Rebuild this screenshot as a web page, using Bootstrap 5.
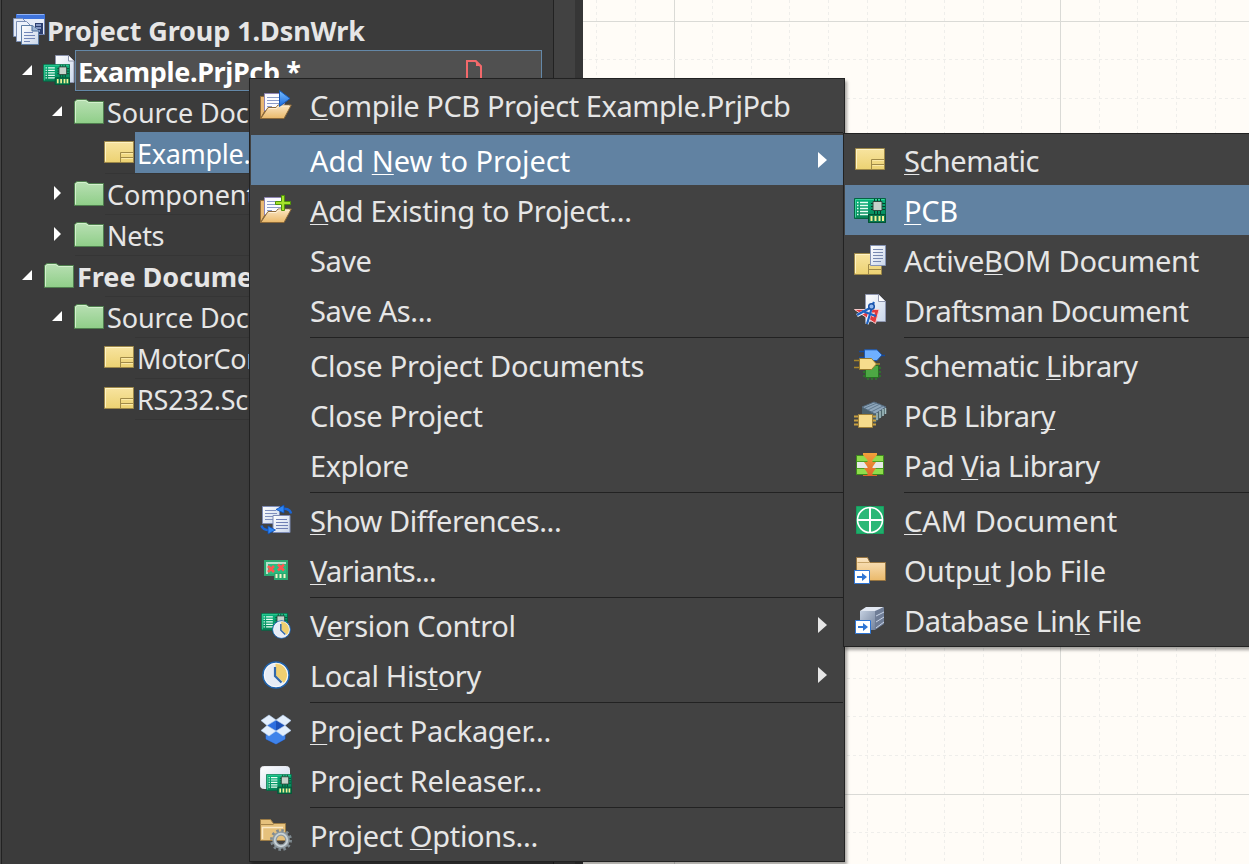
<!DOCTYPE html>
<html lang="en">
<head>
<meta charset="utf-8">
<meta name="viewport" content="width=device-width, initial-scale=1">
<title>Project Group 1.DsnWrk</title>
<link href="https://cdn.jsdelivr.net/npm/bootstrap@5.3.0/dist/css/bootstrap.min.css" rel="stylesheet">
<script src="https://cdn.jsdelivr.net/npm/bootstrap@5.3.0/dist/js/bootstrap.bundle.min.js"></script>
<style>
body{width:1249px;height:864px;overflow:hidden;background:#3b3b3b;color:#e6e6e6;font-family:"Noto Sans","Open Sans",sans-serif}
svg{display:block;flex:none;overflow:visible}
.projects{width:583px;background:#3b3b3b;border-left:1px solid #454545}
.tree{width:553px;padding-top:9px;border-left:1px solid #222;border-right:1px solid #222;font-size:27px;line-height:41px}
.strip{width:21px;background:#424242}
.gutter{width:8px;background:#363636}
.node{height:41px;white-space:nowrap;padding-left:calc(var(--lv)*30px + 10px);background:linear-gradient(#353535,#353535) no-repeat var(--line,600px) 0/100% 1px}
.caret{width:32px;height:41px}
.node .label{padding-left:3px;height:41px}
.node.fw-bold .label{padding-left:2px}
.node .label span{display:inline-block;position:relative;top:1px}
.editing{width:467px;border:1px solid #6488a8;background:#505050;color:#fff;line-height:39px}
.node .label.picked{background:#5f82a3;color:#fff;flex:1;padding-left:2px;margin-left:1px}
.menu-pop{position:absolute;background:#424242;border:1px solid #222;padding:1px;box-shadow:2px 3px 3px rgba(0,0,0,.35);font-size:29px;white-space:nowrap}
#project-menu{left:249px;top:78px;width:596px;height:784px}
#new-menu{left:843px;top:133px;width:430px;height:514px}
.entry{height:50px;line-height:50px;padding-left:9px}
.entry .icon{width:32px;height:32px;margin-right:18px;flex:none}
.entry span{padding-top:2px}
.entry.on{background:#6182a2;color:#fff}
.entry u{text-decoration-thickness:1px;text-underline-offset:2px;text-decoration-skip-ink:none}
.rule{height:5px;padding:2px 0;margin-left:59px}
.rule::before{content:"";display:block;height:1px;background:#222}
.go{margin-left:auto;margin-right:15px}
.tk-1{letter-spacing:-.1px}.tk-2{letter-spacing:-.24px}.tk-3{letter-spacing:-.3px}.tk-35{letter-spacing:-.36px}
.tk-4{letter-spacing:-.42px}.tk-5{letter-spacing:-.49px}.tk-6{letter-spacing:-.56px}.tk-8{letter-spacing:-.77px}
</style>
</head>
<body>
<svg width="0" height="0" class="position-absolute">
<defs>
<linearGradient id="gGreen" x2="0" y2="1"><stop stop-color="#b9e0b4"/><stop offset="1" stop-color="#8fce88"/></linearGradient>
<linearGradient id="gYellow" x2="0" y2="1"><stop stop-color="#f8e4a0"/><stop offset="1" stop-color="#ecd272"/></linearGradient>
<linearGradient id="gTan" x2="0" y2="1"><stop stop-color="#fbe6c4"/><stop offset="1" stop-color="#eab96a"/></linearGradient>
<linearGradient id="gPaper" x2="1" y2="1"><stop stop-color="#fff"/><stop offset="1" stop-color="#c9d6ea"/></linearGradient>
<linearGradient id="gBlue" x2="0" y2="1"><stop stop-color="#7cc0ff"/><stop offset="1" stop-color="#1668e0"/></linearGradient>
<linearGradient id="gBoard" x2="0" y2="1"><stop stop-color="#08b47c"/><stop offset="1" stop-color="#077a50"/></linearGradient>
<linearGradient id="gServer" x2="1" y2="1"><stop stop-color="#c3cfe0"/><stop offset="1" stop-color="#74839c"/></linearGradient>
<linearGradient id="gVia" x2="0" y2="1"><stop stop-color="#f2a23a"/><stop offset="1" stop-color="#e0642a"/></linearGradient>
<symbol id="folder" viewBox="0 0 30 41"><path d="M.5 32.500V10.500L3 8.500h9l3 2h14.500v22z" fill="url(#gGreen)" stroke="#4f7f4e"/><path d="M1.500 31.500V11L3.500 9.500h8l3 2h14.500" fill="none" stroke="#d3f0cd"/></symbol>
<symbol id="sheet" viewBox="0 0 30 22"><path d="M.5.5h29v21H.5z" fill="url(#gYellow)" stroke="#9c8748"/><path d="M1.500 20.500v-19h27" fill="none" stroke="#fff3c4"/><path d="M16.500 21v-9.500H29M17 16.500h12" fill="none" stroke="#a08a48"/><path d="M17.500 12.500H29M17.500 17.500H29" stroke="#fbe9a8"/></symbol>
<symbol id="board" viewBox="0 0 32 25"><path d="M.5.5h31v24h-17v-4H.5z" fill="url(#gBoard)" stroke="#056443"/><path d="M1.500 19.500v-18h29" fill="none" stroke="#39d39c"/><path d="M3 4.500h1.500M3 7.500h1.500M3 10.500h1.500M3 13.500h1.500M3 16.500h1.500M6 4.500h8M6 7.500h8M6 10.500h8M6 13.500h8M6 16.500h8" stroke="#eafff5" stroke-width="1.500"/><path d="M20.500 1v15M23.500 1v15M26.500 1v15M17 5.500h14M17 8.500h14M17 11.500h14" stroke="#03402c"/><path d="M19 3.500h9v9h-9z" fill="#c5d2cb" stroke="#2e4a3e"/><path d="M14.500 16.500h17v8h-17z" fill="#087a4f" stroke="#045234"/><path d="M17.500 18v5M21.500 18v5M25.500 18v5M29 18v5" stroke="#f4f294" stroke-width="2"/></symbol>
<symbol id="openfolder" viewBox="0 0 32 32"><path d="M.5 29.500v-22h3.500v-1h4v10z" fill="#e9b873" stroke="#8e6a38"/><path d="M4.500 22V4.500h16L24.500 8v10z" fill="#fbfbff" stroke="#8f86b5"/><path d="M7 8.500h12M7 11.500h14M7 14.500h14M7 17.500h5" stroke="#8c9cc8"/><path d="M.8 29.500 8 18.500h8l2-2.500h13.300L24 29.500z" fill="url(#gTan)" stroke="#8d6a3a"/><path d="M9 19.500h7.500l2-2.500H29" fill="none" stroke="#fff0d6"/></symbol>
<symbol id="clock" viewBox="0 0 28 28"><circle cx="14" cy="14" r="13" fill="#e6ecf6" stroke="#1f64b0" stroke-width="1.500"/><path d="M13.500 14V2a12 12 0 0 1 8.500 20z" fill="#f0cf70"/><circle cx="14" cy="14" r="11.700" fill="none" stroke="#fff" stroke-width="1" opacity=".7"/><path d="M13 6v9l6.500 6.500" fill="none" stroke="#3269ab" stroke-width="2.200"/></symbol>
<symbol id="jump" viewBox="0 0 16 14"><path d="M.5.5h15v13H.5z" fill="#fff" stroke="#2e75d4"/><path d="M3 7h7" stroke="#2e75d4" stroke-width="2"/><path d="m8 3 5 4-5 4z" fill="#2e75d4"/></symbol>
<symbol id="open" viewBox="0 0 32 41"><path d="M20 15v10H10z" fill="#fff"/></symbol>
<symbol id="shut" viewBox="0 0 32 41"><path d="M12 13v14l7-7z" fill="#fff"/></symbol>
</defs>
</svg>

<main class="position-relative d-flex w-100 h-100 overflow-hidden">
  <aside class="projects d-flex flex-shrink-0">
    <div class="tree">
      <div class="node d-flex fw-bold" style="--lv:0">
        <svg width="33" height="41"><path d="M4.500 5.500h28v20h-28z" fill="#e6ecf8" stroke="#6d7fae"/><path d="M4 5h29v5H4z" fill="#3f74dc"/><path d="M5 5.500h27" stroke="#8fb2f4"/><path d="M23 14h8v11h-8z" fill="#2c3f70"/><path d="M24 16h5M24 19h5M24 22h4" stroke="#9fb2dd" stroke-width="1.500"/><path d="M1.500 9.500h9l4 4v14h-13z" fill="#e3e9f5" stroke="#7b8fb5"/><path d="M4.500 12.500h10l4 4v16h-14z" fill="#edf2fb" stroke="#7b8fb5"/><path d="M9.500 16.500h11l6 5v14h-17z" fill="url(#gPaper)" stroke="#5d7da5"/><path d="M20 16.500v5.500h6" fill="#9eb6d6" stroke="#486a98"/><path d="M12 23.500h9M12 26.500h11M12 29.500h11M12 32.500h6" stroke="#7286b8"/></svg>
        <div class="label tk-1"><span>Project Group 1.DsnWrk</span></div>
      </div>
      <div class="node d-flex fw-bold" style="--lv:0"><svg class="caret"><use href="#open"/></svg>
        <svg width="31" height="41"><path d="M11.500 32.500v-27h13l5.500 5.500v21.500z" fill="url(#gPaper)" stroke="#8b93ad"/><path d="M24.500 5.500V11H30" fill="#fff" stroke="#8b93ad"/><use href="#board" x="-1" y="14" width="27" height="21"/></svg>
        <div class="label editing d-flex tk-35"><span>Example.PrjPcb *</span><svg class="ms-auto" width="16" height="24" style="margin:9px 59px 0 0"><path d="M1 22V1h8.500L15 6.500V22z" fill="none" stroke="#f2696b" stroke-width="2"/><path d="M10 0v6h6z" fill="#f2696b"/></svg></div>
      </div>
      <div class="node d-flex" style="--lv:1;--line:73px"><svg class="caret"><use href="#open"/></svg><svg width="30" height="41"><use href="#folder"/></svg><div class="label tk-1"><span>Source Documents</span></div></div>
      <div class="node d-flex" style="--lv:2"><span class="caret"></span><svg width="30" height="41"><use href="#sheet" y="9" width="30" height="22"/></svg><div class="label picked tk-3"><span>Example.SchDoc</span></div></div>
      <div class="node d-flex" style="--lv:1;--line:103px"><svg class="caret"><use href="#shut"/></svg><svg width="30" height="41"><use href="#folder"/></svg><div class="label tk-1"><span>Components</span></div></div>
      <div class="node d-flex" style="--lv:1;--line:103px"><svg class="caret"><use href="#shut"/></svg><svg width="30" height="41"><use href="#folder"/></svg><div class="label tk-3"><span>Nets</span></div></div>
      <div class="node d-flex fw-bold" style="--lv:0;--line:73px"><svg class="caret"><use href="#open"/></svg><svg width="31" height="41"><use href="#folder" width="30"/></svg><div class="label"><span>Free Documents</span></div></div>
      <div class="node d-flex" style="--lv:1;--line:103px"><svg class="caret"><use href="#open"/></svg><svg width="30" height="41"><use href="#folder"/></svg><div class="label tk-1"><span>Source Documents</span></div></div>
      <div class="node d-flex" style="--lv:2;--line:133px"><span class="caret"></span><svg width="30" height="41"><use href="#sheet" y="9" width="30" height="22"/></svg><div class="label tk-3"><span>MotorControl.SchDoc</span></div></div>
      <div class="node d-flex" style="--lv:2;--line:133px"><span class="caret"></span><svg width="30" height="41"><use href="#sheet" y="9" width="30" height="22"/></svg><div class="label tk-2"><span>RS232.SchDoc</span></div></div>
      <div class="node" style="--lv:2;--line:133px"></div>
    </div>
    <div class="strip"></div><div class="gutter"></div>
  </aside>

  <section class="flex-fill">
    <svg width="666" height="864" id="sheet-grid"><rect width="666" height="864" fill="#fffcf7"/></svg>
  </section>

  <div class="menu-pop" id="project-menu">
    <div class="entry d-flex align-items-center"><svg class="icon"><use href="#openfolder"/><path d="M19.500 1.500v16L30 9.500z" fill="url(#gBlue)" stroke="#1559b8"/></svg><span class="tk-4"><u>C</u>ompile PCB Project Example.PrjPcb</span></div>
    <div class="rule"></div>
    <div class="entry on d-flex align-items-center"><i class="icon"></i><span>Add <u>N</u>ew to Project</span><svg class="go" width="10" height="16"><path d="M0 0v16l9-8z" fill="#fff"/></svg></div>
    <div class="entry d-flex align-items-center"><svg class="icon"><use href="#openfolder" y="-1"/><path d="M21.500 1.500h3v6h6v3h-6v6h-3v-6h-6v-3h6z" fill="#a5e22c" stroke="#4f9408"/></svg><span class="tk-3"><u>A</u>dd Existing to Project...</span></div>
    <div class="entry d-flex align-items-center"><i class="icon"></i><span class="tk-5">Save</span></div>
    <div class="entry d-flex align-items-center"><i class="icon"></i><span class="tk-4">Save As...</span></div>
    <div class="rule"></div>
    <div class="entry d-flex align-items-center"><i class="icon"></i><span class="tk-2">Close Project Documents</span></div>
    <div class="entry d-flex align-items-center"><i class="icon"></i><span class="tk-2">Close Project</span></div>
    <div class="entry d-flex align-items-center"><i class="icon"></i><span class="tk-5">Explore</span></div>
    <div class="rule"></div>
    <div class="entry d-flex align-items-center"><svg class="icon"><path d="M2.500 2.500h17v17h-17z" fill="url(#gPaper)" stroke="#7d8bb5"/><path d="M5 6.500h11M5 9.500h12M5 12.500h12M5 15.500h8" stroke="#7f8fbe"/><path d="M13 11.500h17v17H13z" fill="url(#gPaper)" stroke="#7d8bb5"/><path d="M16 15.500h11M16 18.500h12M16 21.500h12M16 24.500h12" stroke="#6f80b5"/><path d="M31 9.500C30 5.500 26 4.500 22 5" fill="none" stroke="#1a66d8" stroke-width="2.500"/><path d="M16 5.500 24 1v8z" fill="#2e86f4" stroke="#0d4fb8" stroke-width=".8"/><path d="M1.500 21.500c1 4 4 4.700 8 4.700" fill="none" stroke="#1a66d8" stroke-width="2.500"/><path d="m15.500 26-7.500-4v8z" fill="#2e86f4" stroke="#0d4fb8" stroke-width=".8"/></svg><span class="tk-4"><u>S</u>how Differences...</span></div>
    <div class="entry d-flex align-items-center"><svg class="icon"><path d="M4 6h24v20H14v-4H4z" fill="#2aa871"/><path d="M6 8h20v11H14v1H6z" fill="#27bd80"/><path d="M7 20V9h19" fill="none" stroke="#b4e0ca" stroke-width="2"/><path d="M16.500 20v4M20.500 20v4M24.500 20v4" stroke="#f6f4c8" stroke-width="2"/><path d="m8 12 6 6m0-6-6 6M18 10.500l6 6m0-6-6 6" stroke="#ff5550" stroke-width="2.600"/></svg><span class="tk-8"><u>V</u>ariants...</span></div>
    <div class="rule"></div>
    <div class="entry d-flex align-items-center"><svg class="icon"><use href="#board" x="1" y="4" width="27" height="21"/><use href="#clock" x="12" y="11" width="19" height="19"/></svg><span class="tk-3">V<u>e</u>rsion Control</span><svg class="go" width="10" height="16"><path d="M0 0v16l9-8z" fill="#e6e6e6"/></svg></div>
    <div class="entry d-flex align-items-center"><svg class="icon"><use href="#clock" x="2" y="2" width="28" height="28"/></svg><span class="tk-35">Local His<u>t</u>ory</span><svg class="go" width="10" height="16"><path d="M0 0v16l9-8z" fill="#e6e6e6"/></svg></div>
    <div class="rule"></div>
    <div class="entry d-flex align-items-center"><svg class="icon"><path d="M6 19v6l10 5 9-5v-6l-9-4z" fill="#4a90f0" stroke="#2458b8"/><path d="m16 18-10 4v3l10 5 9-5v-3z" fill="#3f83ea"/><path d="m16 6 9.500 5L16 17 6 11z" fill="#2e6fe0"/><path d="M16 6v11l9.500-6z" fill="#1c50b8"/><path d="m9 1 7 5-9 5.500L1 6.500zM23 1l-7 5 9 5.500 6-5zM7 11.500l9 5.500-7 5-8-5.500zM25 11.500 16 17l7 5 8-5.500z" fill="#e2eefc" stroke="#b4cef0" stroke-width=".6"/></svg><span class="tk-3"><u>P</u>roject Packager...</span></div>
    <div class="entry d-flex align-items-center"><svg class="icon"><rect x=".5" y="2.500" width="29" height="22" rx="3" fill="url(#gPaper)" stroke="#e8eaf0"/><use href="#board" x="6" y="10" width="26" height="20"/></svg><span class="tk-3">Project Releaser...</span></div>
    <div class="rule"></div>
    <div class="entry d-flex align-items-center"><svg class="icon"><path d="M.5 21.500V.5h10l3 4h12v17z" fill="#e6c17c" stroke="#9c7c46"/><path d="M2.500 20V8.500H23" fill="none" stroke="#fbe9c6" stroke-width="1.500"/><path d="M.5 5.500h13" stroke="#a8864c"/><circle cx="21" cy="21" r="9.500" fill="none" stroke="#7f8a90" stroke-width="3" stroke-dasharray="2.500 2.475"/><circle cx="21" cy="21" r="6.500" fill="none" stroke="#8e999f" stroke-width="4.500"/><circle cx="21" cy="21" r="6.300" fill="none" stroke="#c8d2d6" stroke-width="1.800"/></svg><span class="tk-3">Project <u>O</u>ptions...</span></div>
  </div>

  <div class="menu-pop" id="new-menu">
    <div class="entry d-flex align-items-center"><svg class="icon"><use href="#sheet" x="1" y="4" width="30" height="22"/></svg><span class="tk-5"><u>S</u>chematic</span></div>
    <div class="entry on d-flex align-items-center"><svg class="icon"><use href="#board" y="4" width="32" height="25"/></svg><span class="tk-35"><u>P</u>CB</span></div>
    <div class="entry d-flex align-items-center"><svg class="icon"><path d="M.5 9.500h27v21H.5z" fill="url(#gYellow)" stroke="#9c8748"/><path d="M1.500 29V10.500H16" fill="none" stroke="#fff3c4"/><path d="M14.500 30v-9.500H27M15 25.500h12" fill="none" stroke="#a08a48"/><path d="M16.500 1.500h15v20h-15z" fill="url(#gPaper)" stroke="#8593b4"/><path d="M19 5.500h10M19 8.500h10M19 11.500h10M19 14.500h10M19 17.500h8" stroke="#7889b0"/></svg><span class="tk-2">Active<u>B</u>OM Document</span></div>
    <div class="entry d-flex align-items-center"><svg class="icon"><path d="M11.500 27.500V.5h13l7 7v20z" fill="url(#gPaper)" stroke="#8f97b0"/><path d="M24.500.5v7h7" fill="#fff" stroke="#8f97b0"/><path d="M.5 15.500h24.500L21.500 29.500z" fill="#e23a3e" stroke="#f6c9c9" stroke-width="1"/><path d="M13 18.500h8l-1.500 5z" fill="#fbdcdc"/><path d="M17 14 3 21.500M17 14l-4 16" stroke="#e8f0ff" stroke-width="3.600"/><path d="M20 8l-2 4M16 14 3 21M17.500 15l-4.500 15M8 17l14 5" fill="none" stroke="#1e62c0" stroke-width="2.200"/><circle cx="17.500" cy="12.500" r="2.800" fill="#8fb8f0" stroke="#1a52a8" stroke-width="1.500"/></svg><span class="tk-6">Draftsman Document</span></div>
    <div class="rule"></div>
    <div class="entry d-flex align-items-center"><svg class="icon"><path d="M9 19h18M9 23h18M9 27h18M14 14v17M18 14v17M22 14v17" stroke="#2d7d2a" stroke-width="1.500"/><path d="M11.500 16.500h13v12h-13z" fill="#4da844" stroke="#277023"/><path d="M5 2.500h6M5 8.500h6M27 6.500h4" stroke="#164a9c" stroke-width="1.500"/><path d="M10.500.8H23l5 5.200-5 5.500H10.500z" fill="#6fb0ff" stroke="#1c57b0"/><path d="M0 11.500h6M0 18.500h6M21 15h5" stroke="#a8862a" stroke-width="1.500"/><path d="M5.500 9.500h12l5 5.500-5 5.500h-12z" fill="#f6dc8c" stroke="#97792c"/></svg><span class="tk-5">Schematic <u>L</u>ibrary</span></div>
    <div class="entry d-flex align-items-center"><svg class="icon"><path d="M8 8v10l13 6V14z" fill="#4b606a"/><path d="M21 14v10l11-10V8z" fill="#4c6468"/><path d="m8 8 12-5 12 5-11 7z" fill="#8ea6ba" stroke="#53687c"/><path d="m11 9 12-5M14 11l12-6M17 13l12-6" stroke="#5f788e"/><path d="M23 14v7M26 12v7M29 10v7M31.500 9v6" stroke="#a5bfc2" stroke-width="1.500"/><path d="M0 17.500h5M0 21.500h5M0 25.500h5M18 17.500h4M18 21.500h4M18 25.500h4" stroke="#c8a040" stroke-width="1.800"/><path d="M4.500 15.500h14v13h-14z" fill="#f6dc8c" stroke="#a08138"/></svg><span class="tk-6">PCB Librar<u>y</u></span></div>
    <div class="entry d-flex align-items-center"><svg class="icon"><path d="M2.500 6.500h27v19h-27z" fill="#8fdc4c" stroke="#3d8a1c"/><path d="M3 13h26v6H3z" fill="#e8e8e8"/><path d="M3 12.500h26M3 19.500h26" stroke="#4ea024"/><path d="M9 4h14v2l-4.500 5v2H22l-3.500 5v1H22l-3.500 5v2H23v1H9v-1h4.500v-2L10 19h3.500v-1L10 13h3.500v-2L9 6z" fill="url(#gVia)"/></svg><span class="tk-5">Pad <u>V</u>ia Library</span></div>
    <div class="rule"></div>
    <div class="entry d-flex align-items-center"><svg class="icon"><path d="M2.500 2.500h27v27h-27z" fill="#1fae6c" stroke="#16a060"/><circle cx="16" cy="16" r="12.500" fill="#2bb877" stroke="#fff" stroke-width="1.600"/><path d="M16 3v26M3 16h26" stroke="#fff" stroke-width="2"/></svg><span><u>C</u>AM Document</span></div>
    <div class="entry d-flex align-items-center"><svg class="icon"><path d="M2.500 26.500v-23h11l2.500 5h15.500v18z" fill="url(#gTan)" stroke="#967440"/><path d="M3.500 8.500h12" stroke="#c8a468"/><use href="#jump" y="16" width="16" height="14"/></svg><span>Outp<u>u</u>t Job File</span></div>
    <div class="entry d-flex align-items-center"><svg class="icon"><path d="m6 7 6-4h18l-7 4z" fill="#e2e8f2"/><path d="M6 7h15v19H6z" fill="url(#gServer)"/><path d="m21 7 9-4v17l-9 6z" fill="#6f7d96"/><path d="m22 12 8-4M22 18l8-5M22 24l8-6" stroke="#c8d4e6"/><use href="#jump" x="1" y="16" width="16" height="14"/></svg><span class="tk-5">Database Lin<u>k</u> File</span></div>
  </div>
</main>
<script>
// Sheet grid: solid line every ten steps, dashed in between.
const grid = document.getElementById('sheet-grid');
const step = 38.65;
function line(d, solid) {
  const p = document.createElementNS('http://www.w3.org/2000/svg', 'path');
  p.setAttribute('d', d);
  p.setAttribute('stroke', solid ? '#dadad6' : '#efeeeb');
  if (!solid) p.setAttribute('stroke-dasharray', '3 3');
  grid.append(p);
}
for (let i = -2; i < 15; i++) { const x = Math.floor(91 + i * step) + .5; line(`M${x} 0V864`, i % 10 === 0); }
for (let i = 0; i < 22; i++) { const y = Math.floor(21 + i * step) + .5; line(`M0 ${y}H666`, i % 10 === 0); }
</script>
</body>
</html>
